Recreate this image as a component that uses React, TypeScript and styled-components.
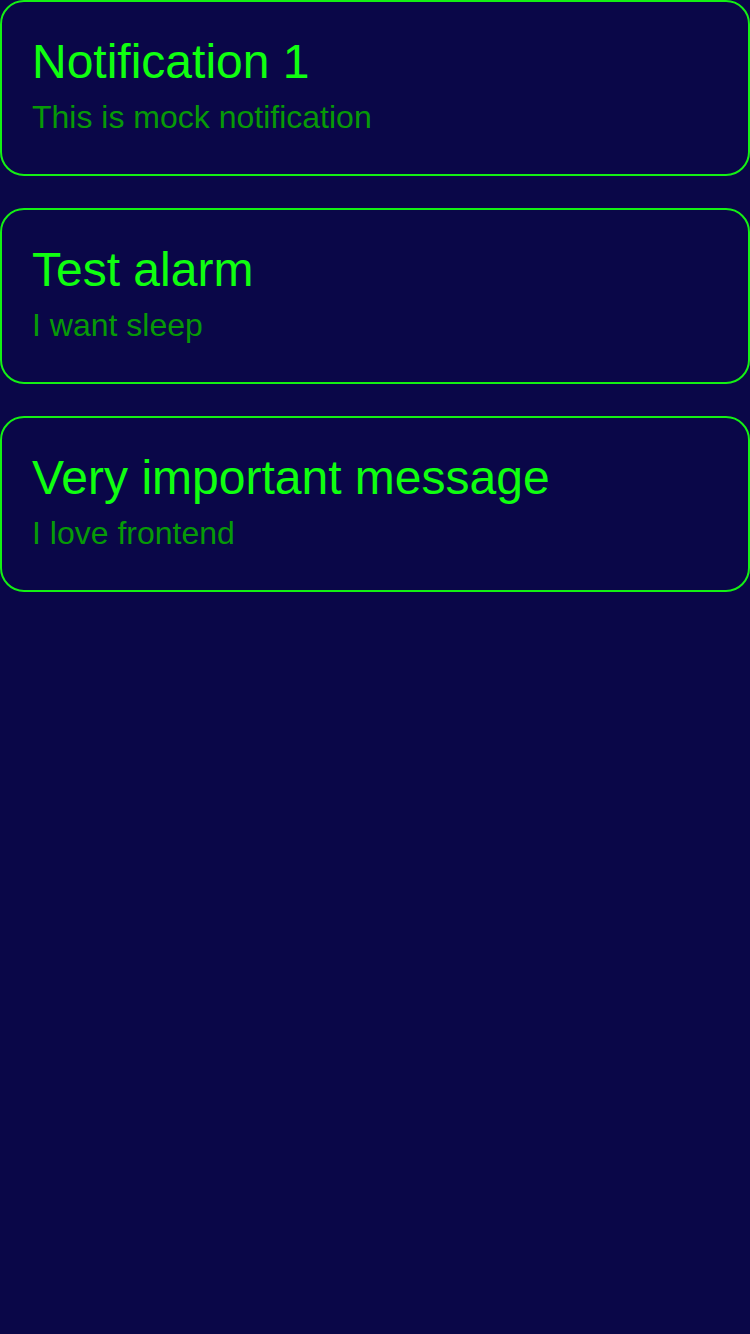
import React from "react";
import styled, { createGlobalStyle } from "styled-components";

const GlobalStyle = createGlobalStyle`
  html, body {
    margin: 0;
    padding: 0;
    background: #0a0748;
    min-height: 100%;
  }
  body {
    font-family: "Liberation Sans", Arial, sans-serif;
  }
`;

const Page = styled.main`
  min-height: 1334px;
  background: #0a0748;
  display: flex;
  flex-direction: column;
  gap: 32px;
`;

const Card = styled.section`
  box-sizing: border-box;
  height: 176px;
  border: 2px solid #14f014;
  border-radius: 24px;
  padding: 32px 30px 0;
  display: flex;
  flex-direction: column;
  gap: 10px;
`;

const Title = styled.h2`
  margin: 0;
  font-size: 48px;
  font-weight: 400;
  line-height: normal;
  color: #10ff10;
`;

const Body = styled.p`
  margin: 0;
  font-size: 32px;
  font-weight: 400;
  line-height: normal;
  color: #079a07;
`;

const notifications = [
  { title: "Notification 1", body: "This is mock notification" },
  { title: "Test alarm", body: "I want sleep" },
  { title: "Very important message", body: "I love frontend" },
];

export default function App() {
  return (
    <>
      <GlobalStyle />
      <Page>
        {notifications.map((n) => (
          <Card key={n.title}>
            <Title>{n.title}</Title>
            <Body>{n.body}</Body>
          </Card>
        ))}
      </Page>
    </>
  );
}
